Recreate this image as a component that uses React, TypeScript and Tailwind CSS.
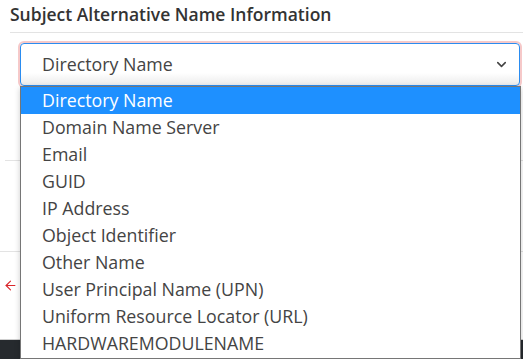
import { ChevronDown, ArrowLeft } from "lucide-react";

const options = [
  "Directory Name",
  "Domain Name Server",
  "Email",
  "GUID",
  "IP Address",
  "Object Identifier",
  "Other Name",
  "User Principal Name (UPN)",
  "Uniform Resource Locator (URL)",
  "HARDWAREMODULENAME",
];

export default function App() {
  return (
    <div className="relative w-[523px] h-[359px] overflow-hidden bg-white font-['Open_Sans',sans-serif] text-[#333]">
      {/* Heading */}
      <h3 className="pl-[10px] h-[32px] text-[17.5px] leading-[28px] font-semibold text-[#333]">
        Subject Alternative Name Information
      </h3>
      <div className="ml-[10px] border-t border-[#e3e3e3]" />

      {/* Select */}
      <div className="ml-[20px] mr-[3px] mt-[10px] h-[43px] rounded-[4px] border border-[#2a8cf0] shadow-[0_0_0_2px_#f6c9c9] flex items-center justify-between pl-[21px] pr-[10px] bg-gradient-to-b from-white from-70% to-[#ececec]">
        <span className="text-[17.8px] text-[#444]">Directory Name</span>
        <ChevronDown className="w-[15px] h-[15px] text-[#444]" strokeWidth={2.5} />
      </div>

      {/* Page content behind the open list */}
      <div className="mt-[74px] ml-[5px] border-t border-[#e3e3e3]" />
      <div className="mt-[90px] border-t border-[#e3e3e3]" />
      <div className="mt-[26px] pl-[3px] h-[14px] flex items-center">
        <ArrowLeft className="w-[15px] h-[15px] text-[#d9262b]" strokeWidth={1.8} />
      </div>
      <div className="mt-[47px] h-[30px] bg-[#262a2e] border-t border-[#cfcfcf]" />

      {/* Open dropdown */}
      <ul className="absolute left-[20px] top-[86px] w-[501px] h-[273px] bg-white border border-[#767676] shadow-[0_2px_6px_rgba(0,0,0,0.2)]">
        {options.map((o, i) => (
          <li
            key={o}
            className={`h-[27px] pl-[21px] flex items-center text-[17.8px] ${
              i === 0 ? "bg-[#1e90ff] text-white" : "text-[#444]"
            }`}
          >
            {o}
          </li>
        ))}
      </ul>
    </div>
  );
}
